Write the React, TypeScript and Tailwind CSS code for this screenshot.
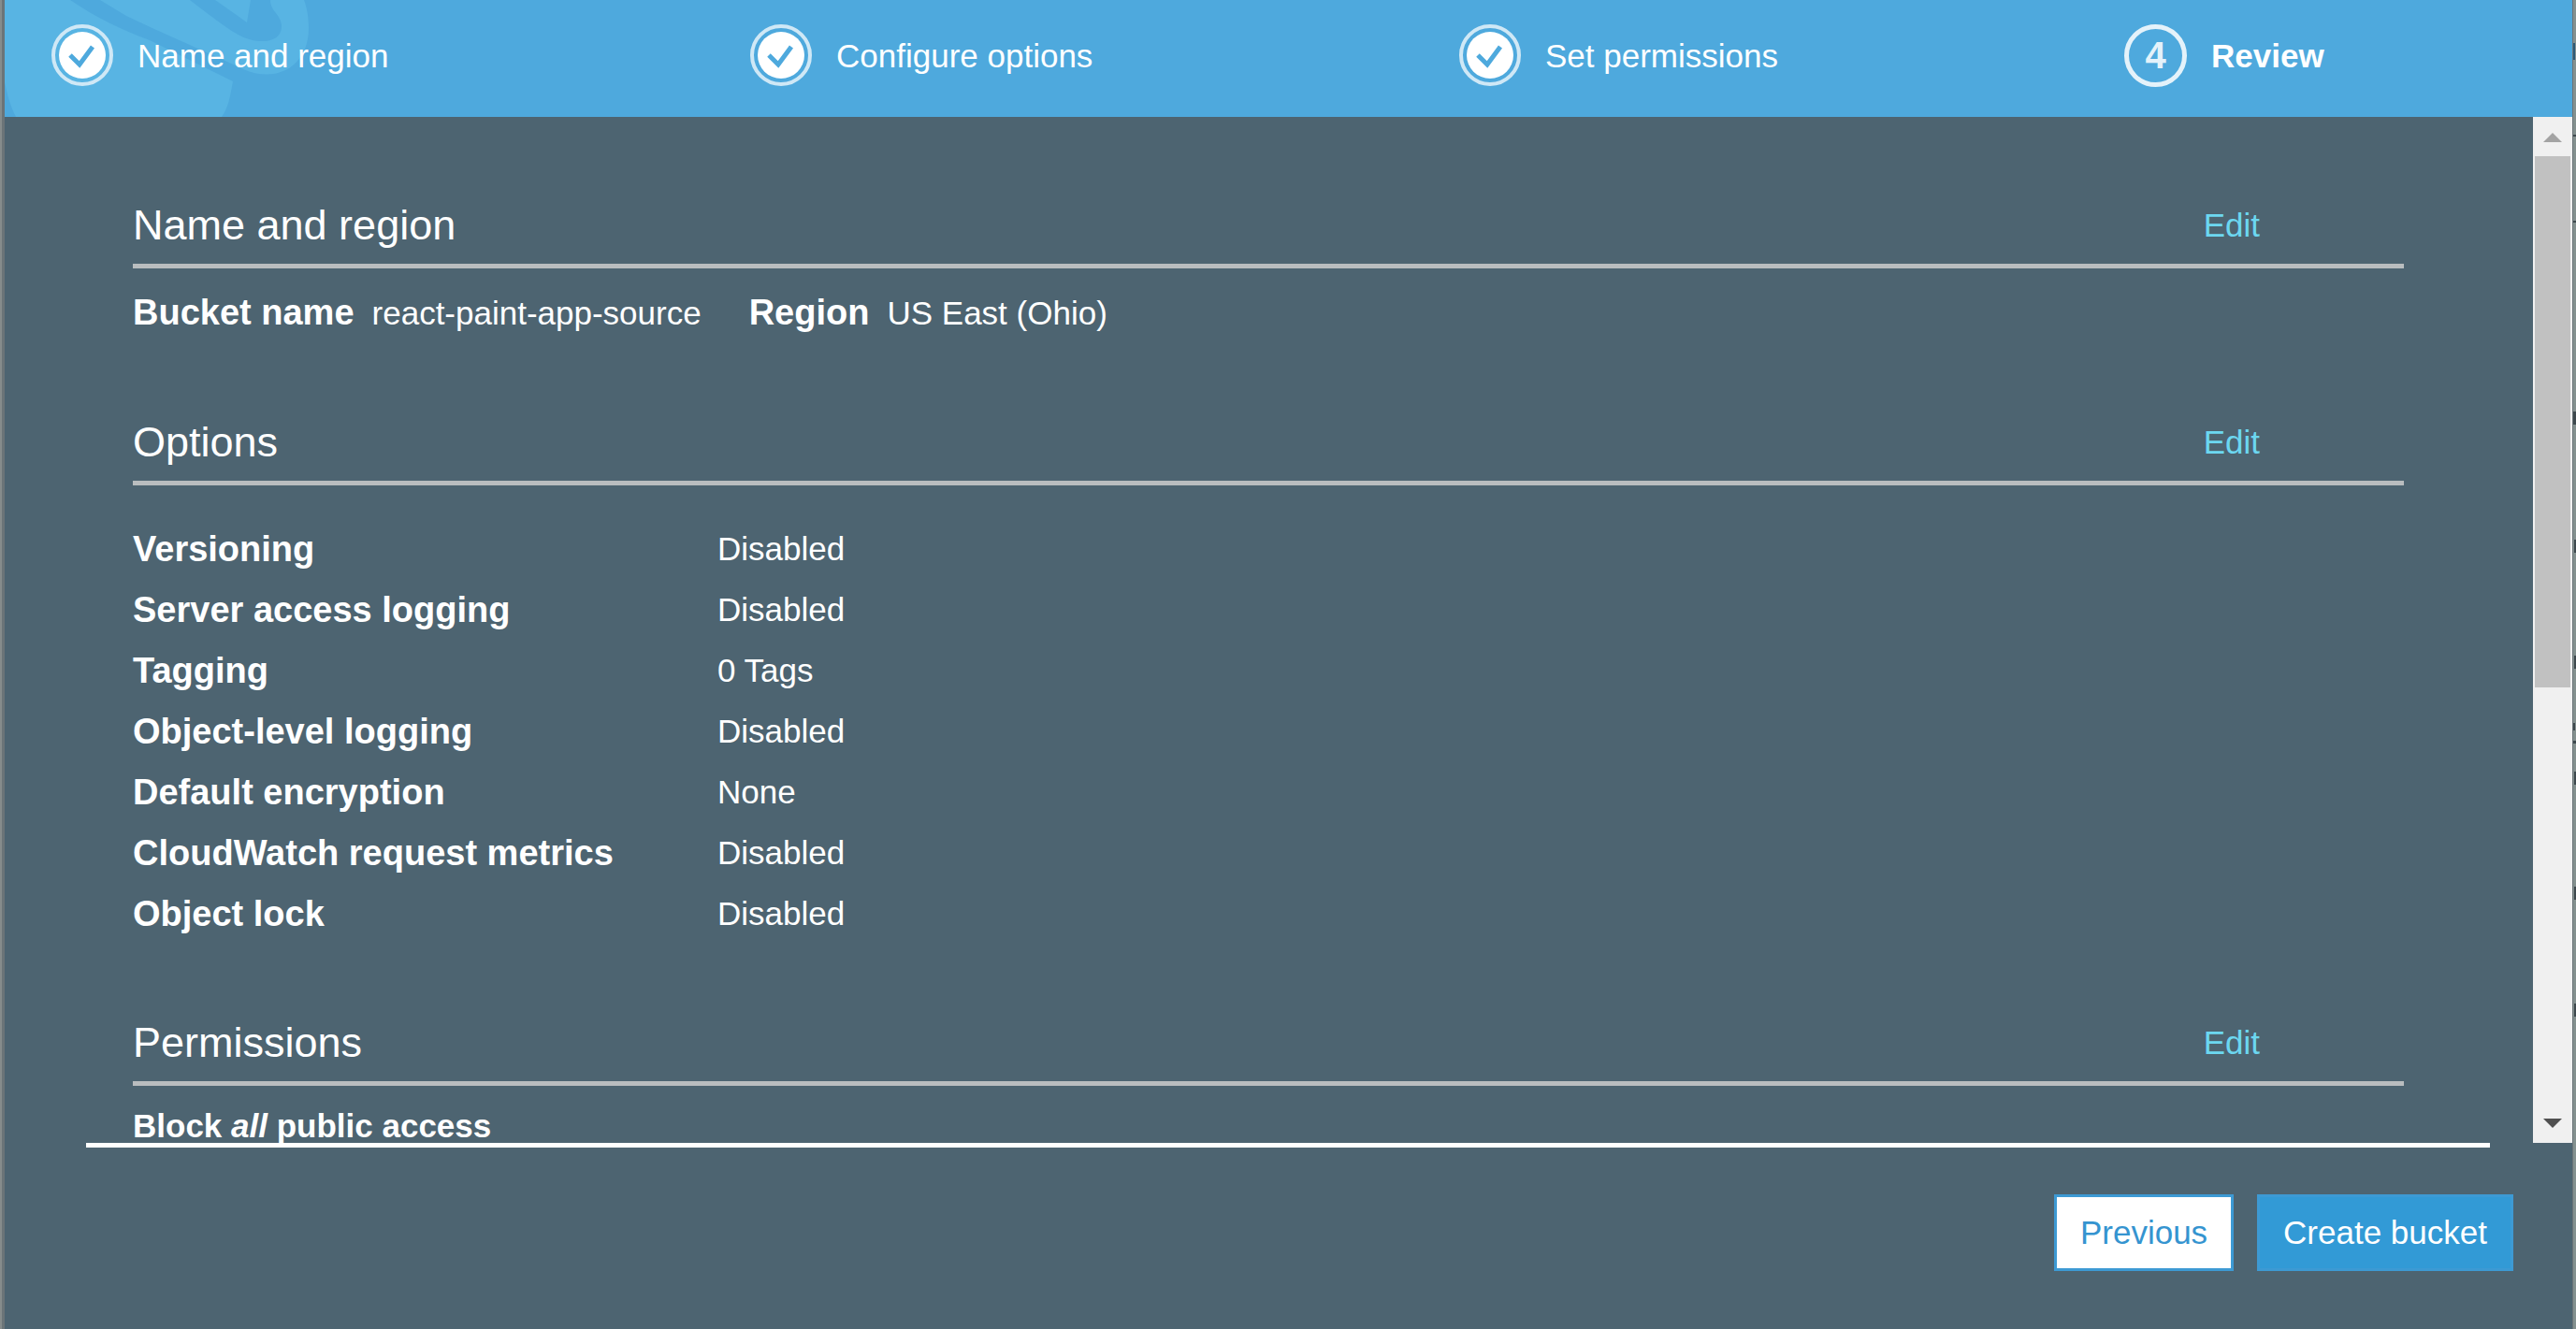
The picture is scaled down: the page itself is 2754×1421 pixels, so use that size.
import { ReactNode } from "react";

const steps = ["Name and region", "Configure options", "Set permissions"];

const options: [string, string][] = [
  ["Versioning", "Disabled"],
  ["Server access logging", "Disabled"],
  ["Tagging", "0 Tags"],
  ["Object-level logging", "Disabled"],
  ["Default encryption", "None"],
  ["CloudWatch request metrics", "Disabled"],
  ["Object lock", "Disabled"],
];

function DoneIcon() {
  return (
    <svg viewBox="0 0 66 66" className="size-[66px] shrink-0" aria-hidden="true">
      <circle cx="33" cy="33" r="31" fill="none" stroke="#cfe8f6" strokeWidth="4" />
      <circle cx="33" cy="33" r="25" fill="#ffffff" />
      <path d="M20 33 L30 43 L44 24" fill="none" stroke="#4ea9dd" strokeWidth="5" />
    </svg>
  );
}

/* Pale bucket emblem, cropped by the corner of the header. */
function HeaderArt() {
  return (
    <svg viewBox="0 0 345 125" className="absolute left-0 top-0 h-full w-[345px]" aria-hidden="true">
      <g fill="#58b4e3">
        <path d="M0 0 H70 C98 19 125 32 155 43 L244 87 C241 104 239 115 232 125 H12 C6 113 3 102 0 88 Z" />
        <path d="M102 0 L130 17 C165 34 215 55 255 74 C292 90 325 70 325 30 C325 18 323 8 320 0 H284 C284 12 295 15 296 27 C297 40 285 45 272 44 C252 42 240 32 198 0 Z" />
        <path d="M225 0 L259 24 L263 0 Z" />
      </g>
    </svg>
  );
}

/* Sliver of the dimmed page that stays visible beside the dialog. */
function PageBehind() {
  return (
    <svg viewBox="0 0 3 1421" preserveAspectRatio="none" className="h-full w-[3px] shrink-0 bg-[#84908f]" aria-hidden="true">
      <rect x="0" y="46" width="2" height="18" fill="#2c5a78" />
      <g fill="#3d484d">
        <rect x="0" y="144" width="3" height="2" />
        <rect x="0" y="236" width="3" height="2" />
        <rect x="0" y="440" width="3" height="14" />
        <rect x="1" y="577" width="2" height="14" />
        <rect x="1" y="701" width="2" height="14" />
        <rect x="0" y="773" width="2" height="8" />
        <rect x="0" y="792" width="3" height="3" />
        <rect x="1" y="825" width="2" height="14" />
        <rect x="1" y="948" width="2" height="14" />
        <rect x="1" y="1073" width="2" height="14" />
      </g>
    </svg>
  );
}

function Section({ title, children }: { title: string; children: ReactNode }) {
  return (
    <section>
      <div className="flex h-[73px] items-start justify-between border-b-[5px] border-[#b9bdbf] pr-[154px]">
        <h2 className="text-[45px] leading-[54px]">{title}</h2>
        <button type="button" className="text-[35px] leading-[54px] text-[#6cd7f0]">
          Edit
        </button>
      </div>
      {children}
    </section>
  );
}

export default function App() {
  return (
    <div className="flex h-screen border-l-2 border-[#868c8c] font-['Liberation_Sans',Arial,sans-serif] text-[35px] text-white">
      <div className="flex min-w-0 flex-1 flex-col border-l-[3px] border-r border-[#6b7478] bg-[#4d6471]">
        <header className="relative h-[125px] shrink-0 bg-[#4ea9dd]">
          <HeaderArt />
          <ol className="relative grid h-[118px] grid-cols-[747fr_758fr_711fr_479fr] items-center pl-[50px]">
            {steps.map((s) => (
              <li key={s} className="flex items-center gap-[26px]">
                <DoneIcon />
                <span className="pt-0.5">{s}</span>
              </li>
            ))}
            <li className="flex items-center gap-[26px] font-bold" aria-current="step">
              <span className="flex size-[67px] items-center justify-center rounded-full border-[5px] text-[40px] text-[#e4f2fa]">4</span>
              <span className="pt-0.5">Review</span>
            </li>
          </ol>
        </header>
        <main className="flex min-h-0 flex-1">
          <div className="flex-1 overflow-hidden pl-[137px] pr-[138px] pt-[89px]">
            <Section title="Name and region">
              <dl className="flex h-[159px] items-baseline pt-[19px]">
                <dt className="text-[38px] font-bold">Bucket name</dt>
                <dd className="ml-[19px]">react-paint-app-source</dd>
                <dt className="ml-[51px] text-[38px] font-bold">Region</dt>
                <dd className="ml-[19px]">US East (Ohio)</dd>
              </dl>
            </Section>
            <Section title="Options">
              <dl className="grid h-[569px] grid-cols-[625px_1fr] content-start pt-[36px]">
                {options.map(([k, v]) => (
                  <div key={k} className="col-span-2 grid h-[65px] grid-cols-subgrid items-center">
                    <dt className="text-[38px] font-bold">{k}</dt>
                    <dd>{v}</dd>
                  </div>
                ))}
              </dl>
            </Section>
            <Section title="Permissions">
              <p className="pt-[17px] font-bold">
                Block <em>all</em> public access
              </p>
            </Section>
          </div>
          <div className="flex w-[42px] flex-col items-center bg-[#f0f0f0]">
            <button type="button" aria-label="Scroll up" className="flex h-[42px] items-center justify-center pt-0.5">
              <svg viewBox="0 0 20 10" className="w-5" aria-hidden="true">
                <path d="M0 10 L10 0 L20 10 Z" fill="#a3a3a3" />
              </svg>
            </button>
            <div className="h-[568px] w-[38px] bg-[#c1c1c1]" />
            <button type="button" aria-label="Scroll down" className="mt-auto flex h-[42px] items-center justify-center">
              <svg viewBox="0 0 20 10" className="w-5" aria-hidden="true">
                <path d="M0 0 L10 10 L20 0 Z" fill="#505050" />
              </svg>
            </button>
          </div>
        </main>
        <footer className="h-[199px] shrink-0 pl-[87px] pr-[63px]">
          <div className="mr-[25px] h-[5px] bg-white" />
          <div className="flex justify-end gap-[25px] pt-[50px]">
            <button type="button" className="h-[82px] border-[3px] border-[#3d9ad4] bg-white px-[25px] text-[#3594d0]">
              Previous
            </button>
            <button type="button" className="h-[82px] border-[3px] border-[#3d9ad4] bg-[#329ad6] px-[25px]">
              Create bucket
            </button>
          </div>
        </footer>
      </div>
      <PageBehind />
    </div>
  );
}
